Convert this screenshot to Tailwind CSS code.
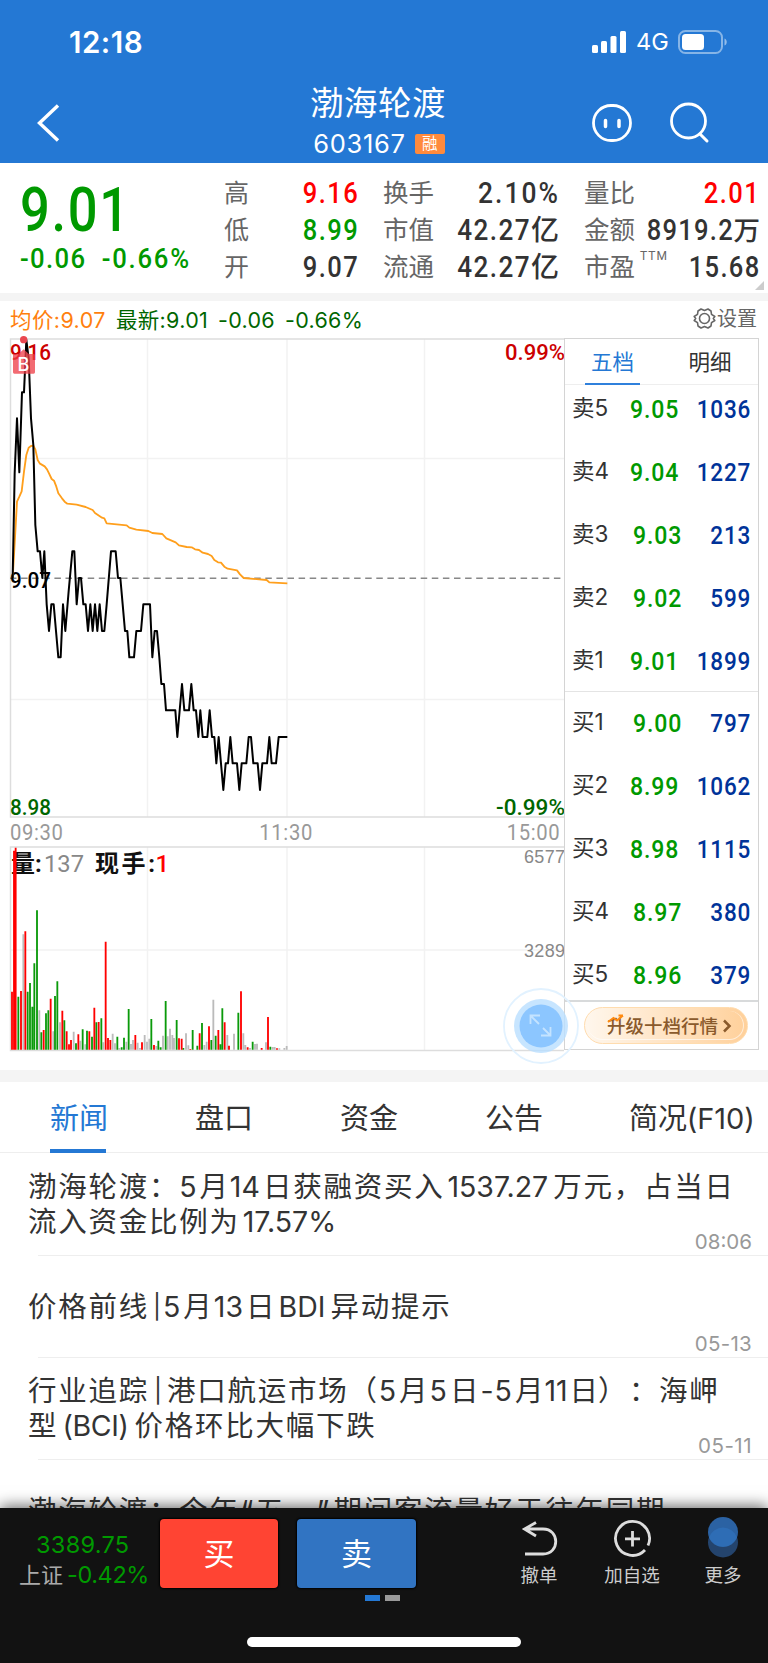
<!DOCTYPE html>
<html lang="zh-CN">
<head>
<meta charset="utf-8">
<title>渤海轮渡 603167</title>
<script src="https://cdn.jsdelivr.net/npm/@tailwindcss/browser@4"></script>
</head>
<body class="w-[768px] h-[1663px] overflow-hidden bg-white text-[#333] font-['Inter','Noto_Sans_CJK_SC',sans-serif]">
<div class="flex flex-col h-[1663px] relative">

<!-- header -->
<header class="h-[163px] shrink-0 bg-[#2478d4] text-white flex flex-col">
  <div class="h-[84px] flex items-center justify-between pl-[69px] pr-[40px]">
    <span class="text-[29.5px] leading-8 font-semibold tracking-[0.5px]">12:18</span>
    <div class="flex items-center">
      <svg width="36" height="24" viewBox="0 0 36 24" fill="#fff"><rect x="1" y="15" width="6" height="8" rx="1.5"/><rect x="10" y="11" width="6" height="12" rx="1.5"/><rect x="19.500" y="6" width="6" height="17" rx="1.5"/><rect x="29" y="1" width="6" height="22" rx="1.5"/></svg>
      <span class="text-[23.5px] leading-7 ml-[9px] w-[42px]">4G</span>
      <svg width="50" height="26" viewBox="0 0 50 26"><rect x="1" y="2" width="43" height="22" rx="6.500" fill="none" stroke="#fff" stroke-opacity=".45" stroke-width="2"/><rect x="4" y="5" width="22" height="16" rx="3.500" fill="#fff"/><path d="M46.500 9.500c3 1 3 6 0 7z" fill="#fff" fill-opacity=".5"/></svg>
    </div>
  </div>
  <div class="h-[79px] flex">
    <div class="w-[278px] pl-[35px] pt-[18px]"><svg width="28" height="42" viewBox="0 0 28 42" fill="none" stroke="#fff" stroke-width="3.400"><path d="M23 3.500 4.500 21 23 38.500"/></svg></div>
    <div class="w-[202px] flex flex-col items-center">
      <div class="text-[33.5px] leading-[38px] tracking-[0.5px] whitespace-nowrap -ml-[2px]">渤海轮渡</div>
      <div class="flex items-center mt-[8px] h-[28px] gap-[9px]">
        <span class="text-[25.5px] leading-7 tracking-[0.7px]">603167</span>
        <span class="w-[30px] h-[20px] rounded-[2px] bg-[#ff8a3c] text-[15.5px] leading-[19px] text-center">融</span>
      </div>
    </div>
    <div class="flex-1 flex pl-[110px] pt-[17px] gap-[34px]">
      <svg width="44" height="44" viewBox="0 0 44 44" fill="none" stroke="#fff" stroke-width="2.800"><rect x="3.500" y="4.500" width="37" height="35" rx="17.500"/><path d="M15.500 19.500v6M29 19.500v6" stroke-width="3.500" stroke-linecap="round"/></svg>
      <svg width="46" height="44" viewBox="0 0 46 44" fill="none" stroke="#fff" stroke-width="2.800"><circle cx="20.500" cy="20" r="17"/><path d="M32 33 39 40" stroke-linecap="round" stroke-width="3"/></svg>
    </div>
  </div>
</header>

<!-- quote summary -->
<section class="h-[130px] shrink-0 flex relative font-['Roboto','Noto_Sans_CJK_SC',sans-serif]">
  <div class="w-[224px] pl-[20px] pt-[11px] text-[#090]">
    <div class="text-[61px] leading-[72px] font-medium origin-left scale-x-[.86] tracking-[2px]">9.01</div>
    <div class="text-[28.5px] leading-[28px] mt-[-1px] font-medium origin-left scale-x-[.9] tracking-[1.5px] whitespace-pre w-[220px]">-0.06<span class="ml-[17px] tracking-[2px]">-0.66%</span></div>
  </div>
  <div class="w-[135px] pt-[12px] text-[29px] leading-[37px] font-medium">
    <div class="flex justify-between"><span class="text-[25px] font-normal text-[#666]">高</span><span class="origin-right scale-x-[.88] tracking-[1.7px] text-[#f00]">9.16</span></div>
    <div class="flex justify-between"><span class="text-[25px] font-normal text-[#666]">低</span><span class="origin-right scale-x-[.88] tracking-[1.7px] text-[#090]">8.99</span></div>
    <div class="flex justify-between"><span class="text-[25px] font-normal text-[#666]">开</span><span class="origin-right scale-x-[.88] tracking-[1.7px]">9.07</span></div>
  </div>
  <div class="w-[176px] ml-[24px] pt-[12px] text-[29px] leading-[37px] font-medium">
    <div class="flex justify-between"><span class="text-[25.5px] font-normal text-[#666]">换手</span><span class="origin-right scale-x-[.91] tracking-[2.2px] whitespace-nowrap -mr-[1px]">2.10%</span></div>
    <div class="flex justify-between"><span class="text-[25.5px] font-normal text-[#666]">市值</span><span class="flex whitespace-nowrap"><span class="origin-right scale-x-[.9] tracking-[1.6px]">42.27</span><span class="text-[28px]">亿</span></span></div>
    <div class="flex justify-between"><span class="text-[25.5px] font-normal text-[#666]">流通</span><span class="flex whitespace-nowrap"><span class="origin-right scale-x-[.9] tracking-[1.6px]">42.27</span><span class="text-[28px]">亿</span></span></div>
  </div>
  <div class="w-[176px] ml-[25px] pt-[12px] text-[29px] leading-[37px] font-medium">
    <div class="flex justify-between"><span class="text-[25.5px] font-normal text-[#666]">量比</span><span class="origin-right scale-x-[.88] tracking-[1.7px] text-[#f00]">2.01</span></div>
    <div class="flex justify-between"><span class="w-[52px] shrink-0 text-[25.5px] font-normal text-[#666]">金额</span><span class="flex whitespace-nowrap justify-end w-[124px]"><span class="origin-right scale-x-[.88] tracking-[1.4px]">8919.2</span><span class="text-[26.5px]">万</span></span></div>
    <div class="flex"><span class="text-[25.5px] font-normal text-[#666]">市盈</span><span class="text-[12px] leading-[14px] pl-[5px] tracking-[1px] font-normal text-[#666]">TTM</span><span class="ml-auto origin-right scale-x-[.88] tracking-[1.5px]">15.68</span></div>
  </div>
  <svg class="absolute right-[4px] bottom-[3px]" width="9" height="9"><path d="M9 0V9H0z" fill="#ccc"/></svg>
</section>
<div class="h-[8px] shrink-0 bg-[#f4f4f4]"></div>

<!-- legend -->
<div class="h-[37px] shrink-0 flex items-center pl-[10px] pr-[11px] text-[21.5px] leading-[36px] whitespace-nowrap">
  <span class="text-[#ff7f0e] w-[106px] tracking-[0.4px]">均价:9.07</span>
  <span class="text-[#060] whitespace-pre tracking-[0.3px]">最新:9.01<span class="ml-[10px]">-0.06</span><span class="ml-[10px]">-0.66%</span></span>
  <span class="ml-auto flex items-center gap-[1px] text-[#666] text-[20px] -mt-[2px]">
    <svg width="23" height="23" viewBox="0 0 23 23" fill="none" stroke="#666" stroke-width="1.600"><circle cx="11.500" cy="11.500" r="5"/><path d="M8 2 11.500 3.500 15 2 18 4 18.500 7.300 21.800 9.500 20.300 11.500 21.800 13.500 18.500 15.700 18 19 15 21 11.500 19.500 8 21 5 19 4.500 15.700 1.200 13.500 2.700 11.500 1.200 9.500 4.500 7.300 5 4z" stroke-linejoin="round"/></svg>设置</span>
</div>

<!-- charts and order book -->
<section class="h-[732px] shrink-0 flex relative pl-[10px]">
  <div class="w-[554px] shrink-0">
    <svg class="block overflow-visible" width="554" height="480" viewBox="10 338 554 480">
      <path d="M147.500 339V817M287 339V817M424.500 339V817M10 458.500H564M10 699.500H564" stroke="#f2f2f2" stroke-width="1.500" fill="none"/>
      <path d="M564 339H10.500V817H564" stroke="#ddd" stroke-width="1.500" fill="none"/>
      <path d="M10 578.200H562" stroke="#888" stroke-width="1.400" stroke-dasharray="6.500 4.600" fill="none"/>
      <g font-family="Roboto" font-size="22" font-weight="500">
        <text x="10" y="360" fill="#c00" textLength="41" lengthAdjust="spacingAndGlyphs">9.16</text>
        <text x="505" y="360" fill="#c00" textLength="60" lengthAdjust="spacingAndGlyphs">0.99%</text>
        <text x="10" y="587.500" fill="#000" textLength="41" lengthAdjust="spacingAndGlyphs">9.07</text>
        <text x="10" y="815" fill="#060" textLength="41" lengthAdjust="spacingAndGlyphs">8.98</text>
        <text x="496" y="815" fill="#060" textLength="69" lengthAdjust="spacingAndGlyphs">-0.99%</text>
      </g>
      <g transform="translate(0 330) scale(.33333)" fill="none" stroke-linejoin="round">
        <path stroke="#ff9f1c" stroke-width="5.500" d="M38 744 44 640 51 515 58 500 65 484 72 425 79 375 86 353 93 348 100 347 106 358 113 390 120 401 134 409 141 418 147 430 155 447 162 452 169 470 175 490 186 505 194 515 202 521 230 524 257 531 278 540 285 549 306 563 313 565 320 580 380 586 388 593 409 599 445 603 457 609 487 612 499 625 527 637 537 646 560 651 575 652 585 658 597 660 608 668 624 672 635 678 643 690 654 697 663 698 673 710 683 716 711 721 720 733 731 744 800 750 808 757 862 760"/>
        <path stroke="#000" stroke-width="6" d="M38 744 44 430 51 265 58 427 66 187 72 187 79 30 86 85 93 265 100 345 106 585 113 664 120 664 127 744 133 664 140 823 147 903 154 823 161 823 168 903 175 982 182 982 189 823 196 903 206 783 217 664 223 664 230 823 237 744 243 744 250 823 257 823 264 903 271 823 278 903 285 823 292 903 299 823 306 903 313 903 320 823 333 664 347 664 354 744 361 744 368 823 375 903 382 903 388 982 402 982 409 903 423 903 430 823 450 823 457 982 464 903 471 903 478 982 484 1062 492 1062 498 1141 526 1141 532 1221 546 1062 553 1141 567 1141 574 1062 581 1141 588 1141 595 1221 601 1141 608 1221 622 1221 629 1141 636 1221 643 1221 649 1300 656 1221 670 1380 677 1300 684 1300 691 1221 698 1300 711 1300 718 1380 725 1300 739 1300 746 1221 753 1221 760 1300 773 1300 780 1380 787 1300 801 1300 808 1221 815 1300 828 1300 836 1221 862 1221"/>
        <circle cx="71" cy="29" r="11" fill="#ea4850"/>
        <path d="M43 72H55L71 58 87 72H101Q105 72 105 76V127Q105 131 101 131H43Q39 131 39 127V76Q39 72 43 72z" fill="#ee3c46" fill-opacity=".76"/>
      </g>
      <text x="17.500" y="370.500" font-family="Inter" font-size="18" font-weight="500" fill="#fff">B</text>
    </svg>
    <div class="h-[28px] flex items-center justify-between pr-[4px] text-[22px] leading-[28px] pt-[2px] text-[#999] font-['Roboto']">
      <span class="origin-left scale-x-[.92] tracking-[0.7px]">09:30</span><span class="scale-x-[.92] tracking-[0.7px] ml-[3px]">11:30</span><span class="origin-right scale-x-[.92] tracking-[0.7px]">15:00</span>
    </div>
    <svg class="block overflow-visible" width="554" height="206" viewBox="10 846 554 206">
      <path d="M147.500 847V1051M287 847V1051M424.500 847V1051M10 950H564" stroke="#f2f2f2" stroke-width="1.500" fill="none"/>
      <path d="M564 847H10.500V1050.500H564" stroke="#ddd" stroke-width="1.500" fill="none"/>
      <g font-size="24" font-weight="500" font-family="Roboto, 'Noto Sans CJK SC', sans-serif">
        <text x="11" y="871.500" fill="#111" font-weight="700">量:</text>
        <text x="44" y="871.500" fill="#888" font-weight="400" textLength="40" lengthAdjust="spacingAndGlyphs">137</text>
        <text x="95" y="871.500" fill="#111" textLength="60" lengthAdjust="spacing" font-weight="700">现手:</text>
        <text x="155.500" y="871.500" fill="#f00">1</text>
      </g>
      <g font-family="Liberation Sans" font-size="18" fill="#888">
        <text x="524" y="863" textLength="41">6577</text><text x="524" y="957" textLength="41">3289</text>
      </g>
      <g transform="translate(0 800) scale(.33333)" fill="none" stroke-width="5.500">
        <path stroke="#bbb" d="M70 749V403M118 749V631M160 749V694M180 749V667M221 749V695M241 749V722M256 749V733M310 749V727M338 749V701M345 749V730M358 749V744M379 749V725M393 749V732M399 749V720M413 749V728M420 749V744M434 749V705M441 749V725M448 749V716M469 749V738M489 749V707M503 749V709M510 749V686M517 749V705M522 749V714M558 749V700M565 749V736M613 749V735M620 749V725M640 749V599M682 749V705M702 749V701M730 749V700M736 749V735M750 749V744M765 749V732M771 749V731M798 749V727M818 749V741M824 749V741M838 749V745M853 749V744M860 749V738"/>
        <path stroke="#0a9a0a" d="M55 749V590M83 749V575M90 749V549M97 749V620M103 749V490M111 749V331M124 749V697M138 749V640M145 749V631M165 749V588M172 749V544M193 749V661M228 749V730M248 749V688M261 749V692M276 749V710M289 749V667M304 749V655M352 749V710M365 749V742M372 749V713M386 749V627M454 749V657M475 749V722M482 749V742M497 749V603M530 749V660M550 749V744M578 749V690M592 749V737M606 749V669M634 749V720M647 749V707M661 749V733M667 749V625M715 749V638M758 749V725M811 749V740"/>
        <path stroke="#f00" d="M36 749V575M42 749V152M47 749V143M63 749V573M76 749V394M131 749V690M152 749V596M187 749V632M200 749V694M207 749V733M213 749V720M235 749V703M268 749V694M283 749V623M296 749V666M317 749V425M324 749V714M331 749V720M406 749V705M426 749V727M462 749V735M537 749V715M545 749V716M571 749V747M599 749V700M627 749V679M655 749V690M674 749V667M687 749V737M723 749V574M743 749V742M785 749V744M804 749V651M831 749V745"/>
      </g>
    </svg>
  </div>

  <div class="w-[195px] h-[712px] border border-[#d4d4d4] flex flex-col">
    <div class="h-[46px] shrink-0 flex border-b border-[#eee] text-[21.5px] leading-[47px] pl-[20px]">
      <div class="w-[55px] h-[46px] text-center text-[#2478d4] border-b-2 border-[#2f80dc]">五档</div>
      <div class="ml-[42px] w-[56px] text-center">明细</div>
    </div>
    <div id="asks" class="h-[307px] shrink-0 border-b border-[#e4e4e4]"></div>
    <div id="bids" class="h-[310px] shrink-0 border-b-2 border-[#d8dadb]"></div>
    <div class="flex-1 flex items-start pt-[5px] pl-[19px]">
      <div class="w-[164px] h-[37px] rounded-full border border-[#ffdcae] bg-linear-to-r from-[#fff7ed] to-[#ffd09a] p-[3px]">
        <div class="h-full rounded-full border-r border-b border-white/60 flex items-center pl-[19px] pt-px text-[18.5px] leading-[28px] font-medium text-[#8a5a2c] whitespace-nowrap relative">升级十档行情
          <svg class="ml-[4px]" width="10" height="14" viewBox="0 0 10 14" fill="none" stroke="#8a5a2c" stroke-width="2.500"><path d="M2 1.500 7.500 7 2 12.500"/></svg>
          <svg class="absolute left-[19px] top-[3px]" width="18" height="10" viewBox="0 0 18 10" fill="none" stroke="#ff8a10" stroke-width="2"><path d="M1 8 6.500 4 10 6.500 16 1.500M11.500 1.500H16"/></svg>
        </div>
      </div>
    </div>
  </div>

  <!-- full-screen toggle over the chart corner -->
  <svg class="absolute left-[503px] top-[650px]" width="76" height="76" viewBox="0 0 76 76" fill="none"><circle cx="38" cy="38" r="37" stroke="#e2f2ff" stroke-width="1.800"/><circle cx="38" cy="38" r="27" fill="#b9dfff" fill-opacity=".8"/><circle cx="38" cy="38" r="21.500" fill="#8cc6ff"/><path d="M27.500 36V27.500H37M28 28 36 36M40 40 47 47M47.500 39V47.500H38" stroke="#c4e3ff" stroke-width="1.800"/></svg>
</section>
<div class="h-[12px] shrink-0 bg-[#f4f4f4]"></div>

<!-- section tabs -->
<nav class="h-[71px] shrink-0 flex border-b border-[#eee] text-[29px] leading-[73px] whitespace-nowrap">
  <div class="w-[56px] ml-[50px] h-[71px] text-[#2478d4] border-b-4 border-[#2478d4]">新闻</div>
  <div class="w-[56px] ml-[89px]">盘口</div>
  <div class="w-[56px] ml-[89px]">资金</div>
  <div class="w-[56px] ml-[89px]">公告</div>
  <div class="ml-[88px] tracking-[-0.1px]">简况(F10)</div>
</nav>

<!-- news -->
<main class="h-[355px] shrink-0 overflow-hidden pt-px pl-[28px] text-[28.5px] leading-[35px] whitespace-nowrap">
  <article class="h-[102px] relative pt-[15px]">
    <p class="flex"><span class="tracking-[1.75px]">渤海轮渡：</span><span>5</span><span class="tracking-[1.75px] ml-[3px]">月</span><span>14</span><span class="tracking-[1.75px] ml-[3px]">日获融资买入</span><span class="ml-[3px]">1537.27</span><span class="tracking-[1.75px] ml-[5px]">万元，占当日</span></p>
    <p class="flex"><span class="tracking-[1.75px]">流入资金比例为</span><span class="ml-[3px]">17.57%</span></p>
    <time class="absolute right-[16px] bottom-[2px] text-[20.5px] leading-[24px] text-[#999]">08:06</time>
    <div class="absolute left-[10px] right-0 bottom-0 h-px bg-[#eee]"></div>
  </article>
  <article class="h-[102px] relative pt-[33px]">
    <p class="flex"><span class="tracking-[1.75px]">价格前线</span><span class="ml-[4px] text-[24px]">|</span><span class="ml-[2px]">5</span><span class="ml-[3px]">月</span><span class="ml-[2px]">13</span><span class="ml-[3px]">日</span><span class="ml-[4px]">BDI</span><span class="ml-[5px] tracking-[1.75px]">异动提示</span></p>
    <time class="absolute right-[16px] bottom-[2px] text-[20.5px] leading-[24px] tracking-[0.3px] text-[#999]">05-13</time>
    <div class="absolute left-[10px] right-0 bottom-0 h-px bg-[#eee]"></div>
  </article>
  <article class="h-[102px] relative pt-[15px]">
    <p class="flex"><span class="tracking-[1.75px]">行业追踪</span><span class="ml-[5px] text-[24px]">|</span><span class="ml-[5px] tracking-[1.75px]">港口航运市场（</span><span>5</span><span class="ml-[3px]">月</span><span class="ml-[2px]">5</span><span class="ml-[3px]">日</span><span class="ml-[2px]">-</span><span class="ml-[1px]">5</span><span class="ml-[3px]">月</span><span class="ml-px">11</span><span class="ml-[2px]">日</span><span class="w-[31px]">）</span><span class="w-[30px]">：</span><span class="tracking-[1.75px]">海岬</span></p>
    <p class="flex"><span>型</span><span class="ml-[6px] tracking-[-0.4px]">(BCI)</span><span class="ml-[6px] tracking-[1.75px]">价格环比大幅下跌</span></p>
    <time class="absolute right-[16px] bottom-[2px] text-[20.5px] leading-[24px] tracking-[0.5px] text-[#999]">05-11</time>
    <div class="absolute left-[10px] right-0 bottom-0 h-px bg-[#eee]"></div>
  </article>
  <article class="pt-[33px]"><p class="flex"><span class="tracking-[1.75px]">渤海轮渡：今年</span><span class="ml-px">“</span><span class="ml-[2px] tracking-[1.75px]">五一</span><span class="ml-px">”</span><span class="ml-[4px] tracking-[1.75px]">期间客流量好于往年同期</span></p></article>
</main>

<!-- trade bar -->
<footer class="h-[155px] shrink-0 relative bg-[#121212] shadow-[0_-2px_14px_rgba(0,0,0,.6)] flex flex-col">
  <div class="h-[98px] flex pt-[11px]">
    <div class="w-[160px] pt-[11px] text-[#090] text-[23.5px] leading-[30px] whitespace-nowrap">
      <div class="pl-[36px] tracking-[0.3px]">3389.75</div>
      <div class="flex items-center pl-[19px]"><span class="text-[#aaa] text-[22px] w-[48px]">上证</span><span class="tracking-[-0.4px]">-0.42%</span></div>
    </div>
    <button class="w-[118px] h-[69px] rounded-[4px] bg-[#ff4433] shadow-[0_0_2px_1px_#000] text-white text-[31px] leading-[69px]">买</button>
    <button class="w-[119px] h-[69px] ml-[19px] rounded-[4px] bg-[#3174c2] shadow-[0_0_2px_1px_#000] text-white text-[31px] leading-[69px]">卖</button>
    <div class="flex flex-1 text-[18.5px] leading-[24px] text-[#ccc] whitespace-nowrap">
      <div class="ml-[85px] w-[76px] flex flex-col items-center gap-[4px]">
        <svg width="38" height="40" viewBox="0 0 38 40" fill="none" stroke="#ddd" stroke-width="2.800"><path d="M16 3.500 4.500 10 16 17M5.500 10H23C40 10 40 35 23 35H5"/></svg>撤单</div>
      <div class="ml-[17px] w-[76px] flex flex-col items-center gap-[4px]">
        <svg width="40" height="40" viewBox="0 0 40 40" fill="none" stroke="#ddd" stroke-width="2.800"><path d="M33 31A17 17 0 1 1 36 26.500M20.500 12V27.500M13 19.800H28"/></svg>加自选</div>
      <div class="ml-[15px] w-[76px] flex flex-col items-center gap-[4px]">
        <svg class="overflow-visible" width="32" height="40" viewBox="0 0 32 40"><circle cx="16" cy="23.500" r="15" fill="#24446d"/><circle cx="16" cy="13" r="15" fill="#2b62a3"/><path d="M2 18.200A15 15 0 0 1 30 18.200A15 15 0 0 1 2 18.200z" fill="#2e6db5"/></svg>更多</div>
    </div>
  </div>
  <div class="absolute left-[365px] top-[87px] flex gap-[5px]"><i class="w-[15px] h-[6px] bg-[#2478d4]"></i><i class="w-[15px] h-[6px] bg-[#999]"></i></div>
  <div class="mt-[31px] ml-[247px] w-[274px] h-[10px] rounded-full bg-white"></div>
</footer>
</div>
<script>
const row = ([n, p, q]) => `<div class="h-[63px] flex items-center pl-[7px] pr-[7px] font-['Roboto'] font-medium text-[26.5px] leading-[30px]">
<span class="w-[61px] -mt-[1px] text-[22.5px] font-normal font-['Inter','Noto_Sans_CJK_SC'] whitespace-nowrap">${n}</span>
<span class="origin-left scale-x-[.87] tracking-[1px] text-[#090]">${p}</span>
<span class="ml-auto origin-right scale-x-[.85] tracking-[1px] text-[#039]">${q}</span></div>`;
document.getElementById('asks').innerHTML = '<div class="-mt-[8px]">' + [['卖5','9.05',1036],['卖4','9.04',1227],['卖3','9.03',213],['卖2','9.02',599],['卖1','9.01',1899]].map(row).join('') + '</div>';
document.getElementById('bids').innerHTML = '<div class="-mt-[1px]">' + [['买1','9.00',797],['买2','8.99',1062],['买3','8.98',1115],['买4','8.97',380],['买5','8.96',379]].map(row).join('') + '</div>';
</script>
</body>
</html>
